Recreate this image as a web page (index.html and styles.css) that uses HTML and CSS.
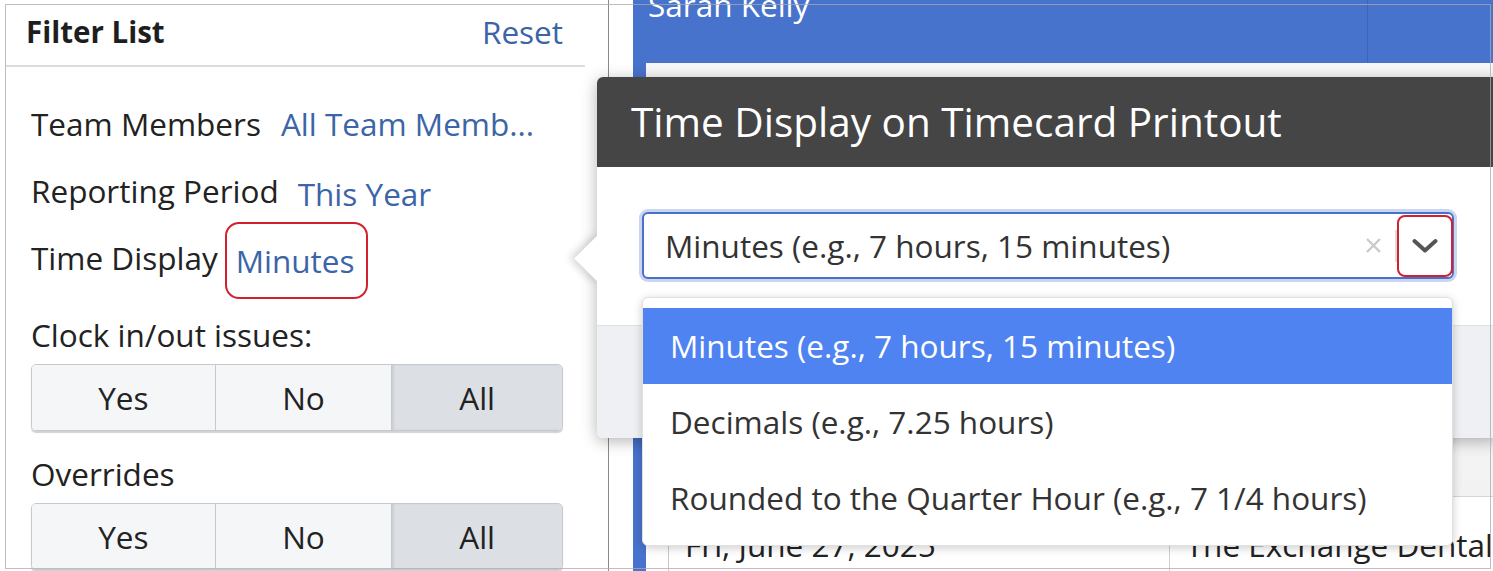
FILE: index.html
```html
<!DOCTYPE html>
<html>
<head>
    <meta charset="utf-8" />
    <title>Timecards</title>
    <link rel="stylesheet" href="styles.css">
</head>
<body>
    <div class="oldal">
        <aside class="oldalsav">
            <div class="szuro">
                <div class="szuro-fej">
                    <span class="szuro-cim">Filter List</span>
                    <a class="link">Reset</a>
                </div>
                <div class="szuro-sorok">
                    <div class="sor">
                        <span class="cimke">Team Members</span>
                        <a class="link">All Team Memb...</a>
                    </div>
                    <div class="sor">
                        <span class="cimke">Reporting Period</span>
                        <a class="link lejjebb">This Year</a>
                    </div>
                    <div class="sor">
                        <span class="cimke">Time Display</span>
                        <a class="link lejjebb jelolt">Minutes</a>
                    </div>

                    <div class="csoport-cim elso">Clock in/out issues:</div>
                    <div class="kapcsolo">
                        <span class="gomb">Yes</span>
                        <span class="gomb">No</span>
                        <span class="gomb aktiv">All</span>
                    </div>

                    <div class="csoport-cim">Overrides</div>
                    <div class="kapcsolo">
                        <span class="gomb">Yes</span>
                        <span class="gomb">No</span>
                        <span class="gomb aktiv">All</span>
                    </div>
                </div>
            </div>
        </aside>

        <main class="tartalom">
            <div class="kartya">
                <div class="kartya-fej">
                    <div class="nev">Sarah Kelly</div>
                    <div class="fej-cella"></div>
                </div>
                <div class="kartya-test">
                    <div class="fejlec-sav"></div>
                    <div class="tabla-sor">
                        <div class="cella elso-cella">Fri, June 27, 2025</div>
                        <div class="cella">The Exchange Dental</div>
                    </div>
                </div>
            </div>
        </main>

        <div class="felugro">
            <div class="felugro-fej">Time Display on Timecard Printout</div>
            <div class="felugro-test">
                <div class="valaszto">
                    <span class="valaszto-ertek">Minutes (e.g., 7 hours, 15 minutes)</span>
                    <span class="torol">
                        <svg width="17" height="17" viewBox="0 0 17 17"><path d="M2 2 L15 15 M15 2 L2 15" stroke="#cacaca" stroke-width="2.4" fill="none" /></svg>
                    </span>
                    <span class="elvalaszto"></span>
                    <span class="nyil">
                        <svg width="26" height="16" viewBox="0 0 26 16"><path d="M2.5 3 L13 12.5 L23.5 3" stroke="#555" stroke-width="4" fill="none" stroke-linecap="round" stroke-linejoin="round" /></svg>
                    </span>
                    <div class="lista">
                        <div class="opcio kivalasztott">Minutes (e.g., 7 hours, 15 minutes)</div>
                        <div class="opcio">Decimals (e.g., 7.25 hours)</div>
                        <div class="opcio">Rounded to the Quarter Hour (e.g., 7 1/4 hours)</div>
                    </div>
                </div>
            </div>
            <div class="felugro-lab"></div>
        </div>

        <div class="keret"></div>
    </div>
</body>
</html>
```

FILE: styles.css
```css
* {
    box-sizing: border-box;
}

html, body {
    margin: 0;
    height: 571px;
    overflow: hidden;
    background-color: #fff;
    font-family: "Open Sans", "Liberation Sans", sans-serif;
    color: #222;
}

.oldal {
    position: relative;
    display: flex;
    height: 571px;
}

/* bal oldali szuro */

.oldalsav {
    width: 609px;
    flex: none;
    border-right: 1px solid #8a8a8a;
    padding-left: 6px;
}

.szuro {
    width: 579px;
}

.szuro-fej {
    height: 67px;
    display: flex;
    justify-content: space-between;
    align-items: center;
    padding: 0 22px 2px 20px;
    border-bottom: 2px solid #dcdcdc;
}

.szuro-cim {
    font-size: 29.5px;
    font-weight: 700;
    color: #1e1e1e;
}

.link {
    color: #3b65a6;
    font-size: 31.5px;
    cursor: pointer;
}

.szuro-sorok {
    padding: 37px 0 0 25px;
}

.sor {
    display: flex;
    align-items: baseline;
    gap: 20px;
    height: 40px;
    line-height: 40px;
    margin-bottom: 27px;
    font-size: 31.5px;
}

.lejjebb {
    position: relative;
    top: 3px;
    margin-left: -1px;
}

.jelolt {
    margin-left: -2px;
}

.jelolt::after {
    content: "";
    position: absolute;
    left: -11px;
    right: -13px;
    top: -19px;
    bottom: -18px;
    border: 2px solid #d3202f;
    border-radius: 14px;
}

.csoport-cim {
    font-size: 31.5px;
    line-height: 40px;
    margin-top: 23px;
}

.csoport-cim.elso {
    margin-top: 37px;
}

.kapcsolo {
    display: grid;
    grid-template-columns: 183fr 177fr 171fr;
    width: 532px;
    height: 67px;
    margin-top: 9px;
    border: 1px solid #c6c9ce;
    border-radius: 5px;
    box-shadow: 0 2px 1px rgba(0, 0, 0, 0.18);
    overflow: hidden;
}

.gomb {
    display: flex;
    align-items: center;
    justify-content: center;
    font-size: 31.5px;
    background-color: #f5f6f8;
    border-left: 1px solid #c6c9ce;
}

.gomb:first-child {
    border-left: none;
}

.gomb.aktiv {
    background-color: #dcdfe4;
    box-shadow: inset 2px 0 2px rgba(0, 0, 0, 0.08);
}

/* jobb oldali kartya */

.tartalom {
    flex: 1;
    padding-left: 24px;
    min-width: 0;
}

.kartya {
    margin-top: -30px;
}

.kartya-fej {
    display: flex;
    height: 93px;
    background-color: #4873cc;
    color: #fff;
}

.nev {
    width: 735px;
    padding: 14px 0 0 15px;
    font-size: 31.5px;
    line-height: 42px;
    border-right: 1px solid #3d64b6;
}

.fej-cella {
    flex: 1;
}

.kartya-test {
    border-left: 13px solid #4873cc;
    padding-left: 22px;
}

.fejlec-sav {
    height: 434px;
    margin-left: -22px;
    background: linear-gradient(#f8f8f8, #f2f2f2);
    border-bottom: 1px solid #d4d4d4;
}

.tabla-sor {
    display: flex;
    height: 80px;
    border-left: 1px solid #c8c8c8;
}

.cella {
    padding: 27px 0 0 16px;
    font-size: 31.5px;
    line-height: 42px;
    white-space: nowrap;
}

.elso-cella {
    width: 503px;
    border-right: 1px solid #d0d0d0;
}

/* felugro ablak */

.felugro {
    position: absolute;
    left: 597px;
    top: 77px;
    width: 902px;
    z-index: 5;
    border-radius: 6px;
    box-shadow: 0 3px 16px rgba(0, 0, 0, 0.3);
}

.felugro::before {
    content: "";
    position: absolute;
    left: -16px;
    top: 165px;
    width: 33px;
    height: 33px;
    background-color: #fff;
    transform: rotate(45deg);
    box-shadow: -3px 3px 8px rgba(0, 0, 0, 0.18);
    z-index: -1;
}

.felugro-fej {
    height: 90px;
    line-height: 90px;
    padding-left: 34px;
    background-color: #454545;
    color: #fff;
    font-size: 40.5px;
    border-radius: 6px 6px 0 0;
}

.felugro-test {
    height: 158px;
    padding: 45px 45px 0 45px;
    background-color: #fff;
}

.felugro-lab {
    height: 113px;
    background-color: #eef0f3;
    border-top: 1px solid #dde0e4;
    border-radius: 0 0 6px 6px;
}

.valaszto {
    position: relative;
    display: flex;
    align-items: center;
    width: 812px;
    height: 67px;
    border: 2px solid #4a70c8;
    border-radius: 6px;
    box-shadow: 0 0 0 3px #c9d6f3;
    background-color: #fff;
}

.valaszto-ertek {
    flex: 1;
    padding-left: 21px;
    font-size: 31.5px;
    color: #333;
}

.torol {
    display: flex;
    margin-right: 13px;
}

.elvalaszto {
    width: 2px;
    height: 32px;
    background-color: #dcdcdc;
}

.nyil {
    display: flex;
    align-items: center;
    justify-content: center;
    width: 56px;
    height: 62px;
    margin-right: -1px;
    border: 2px solid #d3202f;
    border-radius: 8px;
}

.lista {
    position: absolute;
    left: -2px;
    top: 83px;
    width: 811px;
    padding: 10px 0 9px 0;
    background-color: #fff;
    border: 1px solid #e0e0e0;
    border-radius: 6px;
    box-shadow: 0 2px 10px rgba(0, 0, 0, 0.2);
}

.opcio {
    height: 76px;
    line-height: 76px;
    padding-left: 27px;
    font-size: 31.5px;
    color: #333;
}

.opcio.kivalasztott {
    background-color: #4f83f1;
    color: #fff;
}

.keret {
    position: absolute;
    left: 5px;
    top: 4px;
    width: 1486px;
    height: 565px;
    border: 1px solid rgba(170, 170, 170, 0.75);
    pointer-events: none;
    z-index: 10;
}
```
